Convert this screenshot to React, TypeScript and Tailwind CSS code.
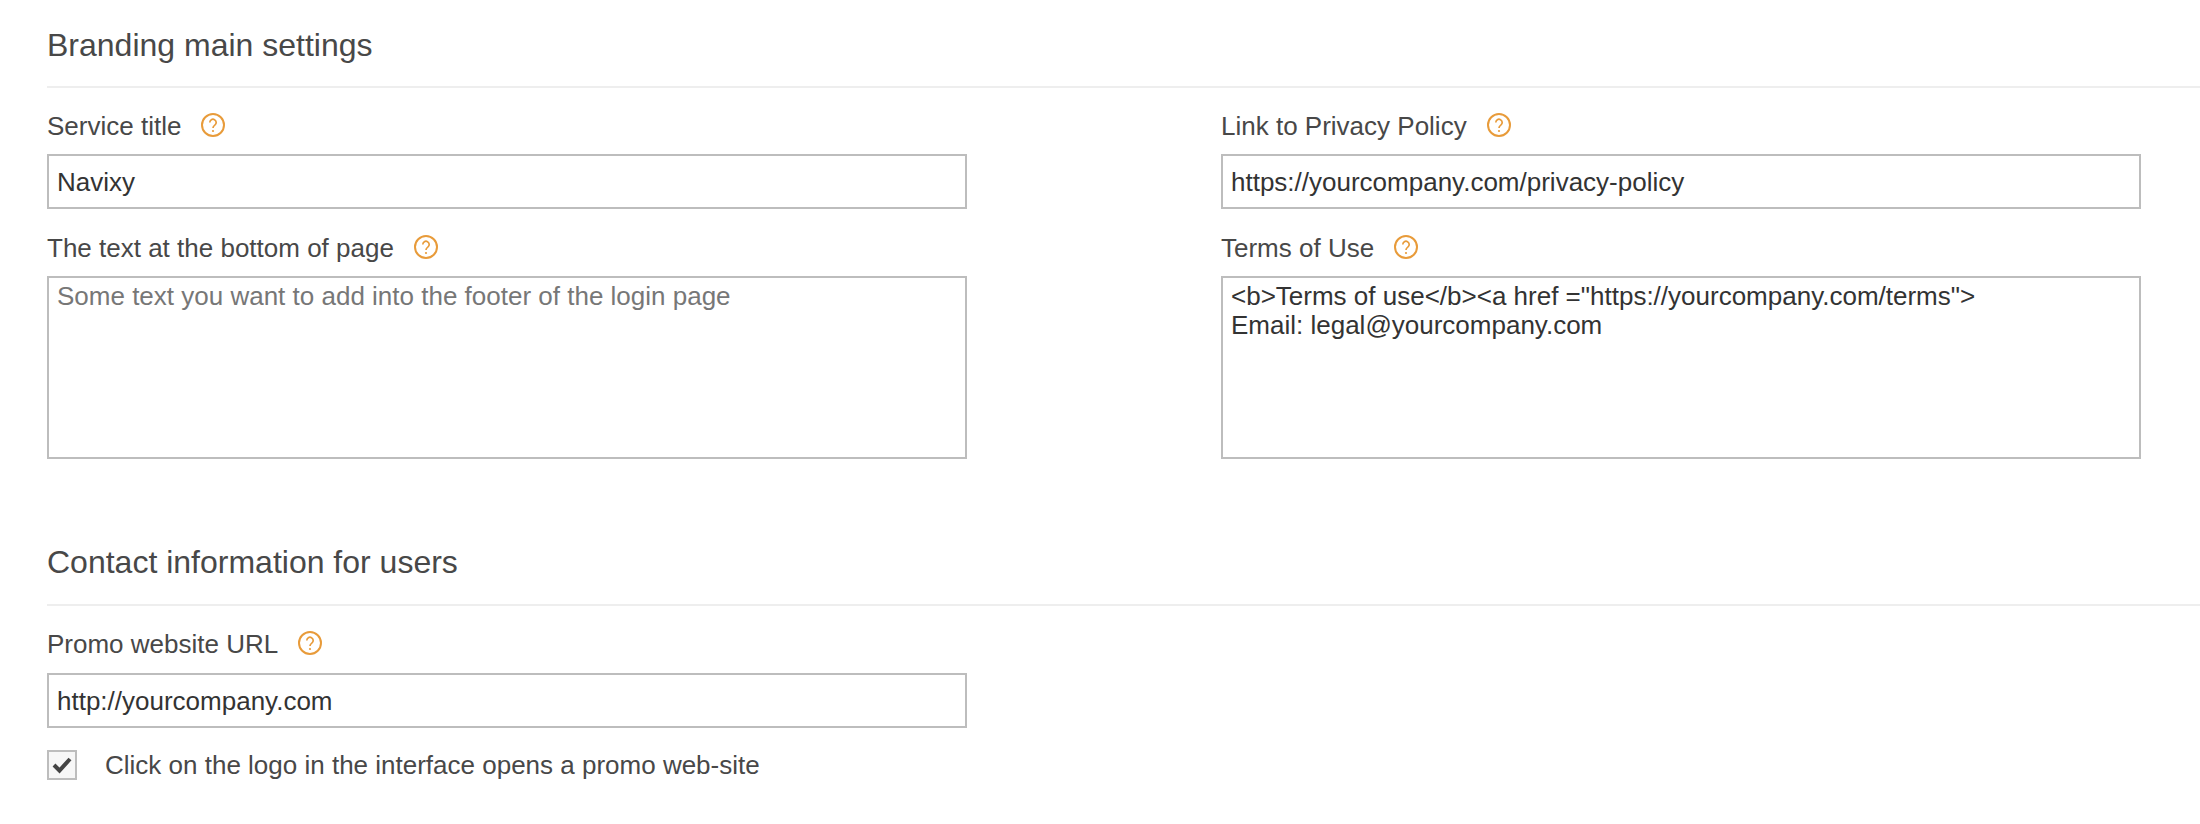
import React from 'react';

const HelpIcon = () => (
  <svg viewBox="0 0 24 24" className="ml-[20px] mb-[3px] w-[24px] h-[24px] text-[#e89b3a]" fill="none" stroke="currentColor">
    <circle cx="12" cy="12" r="11" strokeWidth="2" />
    <path d="M8.8 9.4a3.2 3.2 0 1 1 5 2.7c-1.2.8-1.8 1.4-1.8 2.9" strokeWidth="1.7" />
    <circle cx="12" cy="18" r="1.1" fill="currentColor" stroke="none" />
  </svg>
);

const FieldLabel: React.FC<{ text: string; className?: string }> = ({ text, className = '' }) => (
  <label className={`flex items-center h-[30px] text-[26px] leading-[30px] text-[#484848] ${className}`}>
    <span>{text}</span>
    <HelpIcon />
  </label>
);

const TextField: React.FC<{ value: string }> = ({ value }) => (
  <input
    type="text"
    defaultValue={value}
    className="block w-full h-[55px] border-2 border-[#bdbdbd] px-[8px] pt-[1px] text-[26px] text-[#333] bg-white outline-none"
  />
);

const TextBox: React.FC<{ value?: string; placeholder?: string }> = ({ value, placeholder }) => (
  <textarea
    defaultValue={value}
    placeholder={placeholder}
    className="block w-full h-[183px] border-2 border-[#bdbdbd] px-[8px] pt-[4px] text-[26px] leading-[29px] text-[#333] placeholder:text-[#777] placeholder:opacity-100 bg-white outline-none resize-none"
  />
);

const SectionTitle: React.FC<{ text: string; className?: string }> = ({ text, className = '' }) => (
  <h2 className={`border-b-2 border-[#eee] text-[32px] leading-[38px] font-normal text-[#484848] ${className}`}>
    {text}
  </h2>
);

export default function App() {
  return (
    <div className="min-h-[824px] bg-white pl-[47px] pt-[26px] font-['Liberation_Sans',Arial,sans-serif]">
      <SectionTitle text="Branding main settings" className="pb-[22px]" />

      <div className="grid grid-cols-[920px_920px] gap-x-[254px] pt-[23px]">
        <div>
          <FieldLabel text="Service title" className="mb-[13px]" />
          <TextField value="Navixy" />
          <FieldLabel text="The text at the bottom of page" className="mt-[24px] mb-[13px]" />
          <TextBox placeholder="Some text you want to add into the footer of the login page" />
        </div>
        <div>
          <FieldLabel text="Link to Privacy Policy" className="mb-[13px]" />
          <TextField value="https://yourcompany.com/privacy-policy" />
          <FieldLabel text="Terms of Use" className="mt-[24px] mb-[13px]" />
          <TextBox value={'<b>Terms of use</b><a href ="https://yourcompany.com/terms">\nEmail: legal@yourcompany.com'} />
        </div>
      </div>

      <SectionTitle text="Contact information for users" className="mt-[84px] pb-[23px]" />

      <div className="w-[920px] pt-[23px]">
        <FieldLabel text="Promo website URL" className="mb-[14px]" />
        <TextField value="http://yourcompany.com" />
        <label className="flex items-center mt-[21px] text-[26px] leading-[30px] text-[#484848]">
          <span className="flex items-center justify-center w-[30px] h-[30px] border-2 border-[#bdbdbd] bg-[#f7f7f7]">
            <svg viewBox="0 0 26 26" className="w-[26px] h-[26px]">
              <path d="M5 13 L10.5 18.5 L21 7" fill="none" stroke="#444" strokeWidth="4" />
            </svg>
          </span>
          <span className="ml-[28px] pt-[1px]">Click on the logo in the interface opens a promo web-site</span>
        </label>
      </div>
    </div>
  );
}
